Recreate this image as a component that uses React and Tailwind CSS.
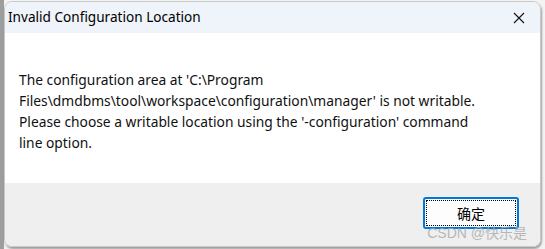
export default function App() {
  return (
    <div className="w-[545px] h-[249px] bg-[#f3f3f3] overflow-hidden" style={{ fontFamily: '"Segoe UI", "Noto Sans", "Noto Sans CJK SC", sans-serif' }}>
      <div className="flex h-full">
        <div className="w-[4px] bg-[#9d9d9d]" />
        <div className="flex flex-col w-[537px] h-[246px] mt-px rounded-[8px] overflow-hidden border border-[#c8c8c8] shadow-[1px_2px_2px_rgba(0,0,0,0.35)]">
          {/* title bar */}
          <div className="h-[31px] bg-[#eff3fa] flex items-center justify-between pl-[3px] pr-[12px]">
            <span className="text-[13.6px] text-black">Invalid Configuration Location</span>
            <svg width="14" height="14" viewBox="0 0 14 14" className="mr-[2px]">
              <path d="M2 2 L12 12 M12 2 L2 12" stroke="#111" strokeWidth="1.1" />
            </svg>
          </div>
          {/* message */}
          <div className="h-[150px] bg-white pl-[14px] pt-[36px]">
            <p className="text-[13.8px] leading-[21px] text-[#111] w-[462px]">
              The configuration area at 'C:\Program Files\dmdbms\tool\workspace\configuration\manager' is not writable. Please choose a writable location using the '-configuration' command line option.
            </p>
          </div>
          {/* footer */}
          <div className="flex-1 bg-[#efefef] flex justify-end items-start pt-[14px] pr-[21px] relative">
            <button className="w-[96px] h-[32px] bg-[#fdfdfd] border-2 border-[#0078d7] rounded-[3px] p-[1px]">
              <div className="w-full h-full border border-dotted border-black flex items-center justify-center text-[14px] text-black">
                确定
              </div>
            </button>
            <span className="absolute right-[13px] bottom-[2px] text-[14px] text-[#a8a8a8]/80" style={{ fontFamily: '"Liberation Sans", "Noto Sans CJK SC", sans-serif' }}>
              CSDN @快乐是
            </span>
          </div>
        </div>
      </div>
    </div>
  );
}
